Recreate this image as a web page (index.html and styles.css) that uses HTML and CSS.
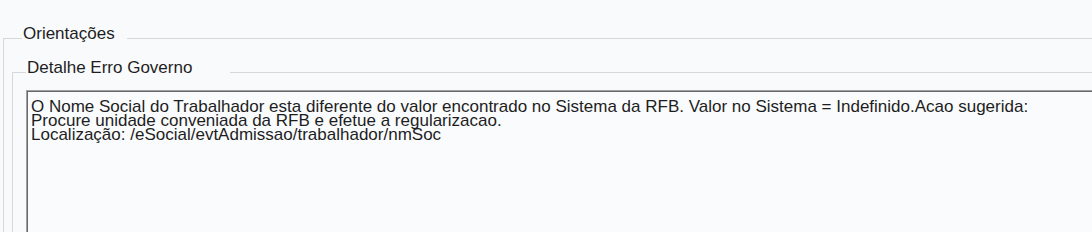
FILE: index.html
```html
<!DOCTYPE html>
<html lang="pt-BR">

<head>
  <meta charset="UTF-8">
  <meta name="viewport" content="width=device-width, initial-scale=1.0">
  <title>Orientações</title>
  <link rel="stylesheet" href="styles.css">
</head>

<body>
  <fieldset class="group outer">
    <legend class="title">Orientações</legend>
    <fieldset class="group inner">
      <legend class="title">Detalhe Erro Governo</legend>
      <div class="memo">
        <div>O Nome Social do Trabalhador esta diferente do valor encontrado no Sistema da RFB. Valor no Sistema = Indefinido.Acao sugerida:</div>
        <div>Procure unidade conveniada da RFB e efetue a regularizacao.</div>
        <div>Localização: /eSocial/evtAdmissao/trabalhador/nmSoc</div>
      </div>
    </fieldset>
  </fieldset>
</body>

</html>
```

FILE: styles.css
```css
html,
body {
  margin: 0;
  height: 100%;
  overflow: hidden;
}

body {
  padding-top: 27px;
  background: #f9fafc;
  color: #1e1e1e;
  font-family: "Liberation Sans", Arial, sans-serif;
  font-size: 17px;
  line-height: 14px;
}

.group {
  border: none;
  border-top: 1px solid #d6d8da;
  border-left: 1px solid #d6d8da;
  min-width: 0;
}

.title {
  box-sizing: border-box;
  padding: 0 0 9px 1px;
  white-space: nowrap;
}

.outer {
  width: 1150px;
  margin: 0 0 0 3px;
  padding: 11px 0 0 8px;
}

.outer > .title {
  width: 105px;
  margin-left: 10px;
}

.inner {
  margin: 0;
  padding: 6px 0 0 13px;
}

.inner > .title {
  width: 204px;
}

.memo {
  height: 160px;
  padding: 9px 4px;
  background: #fafbfd;
  border: 1px solid #a0a0a0;
  box-shadow: inset 1px 1px 0 #696969;
  line-height: 14.2px;
  white-space: nowrap;
}
```
